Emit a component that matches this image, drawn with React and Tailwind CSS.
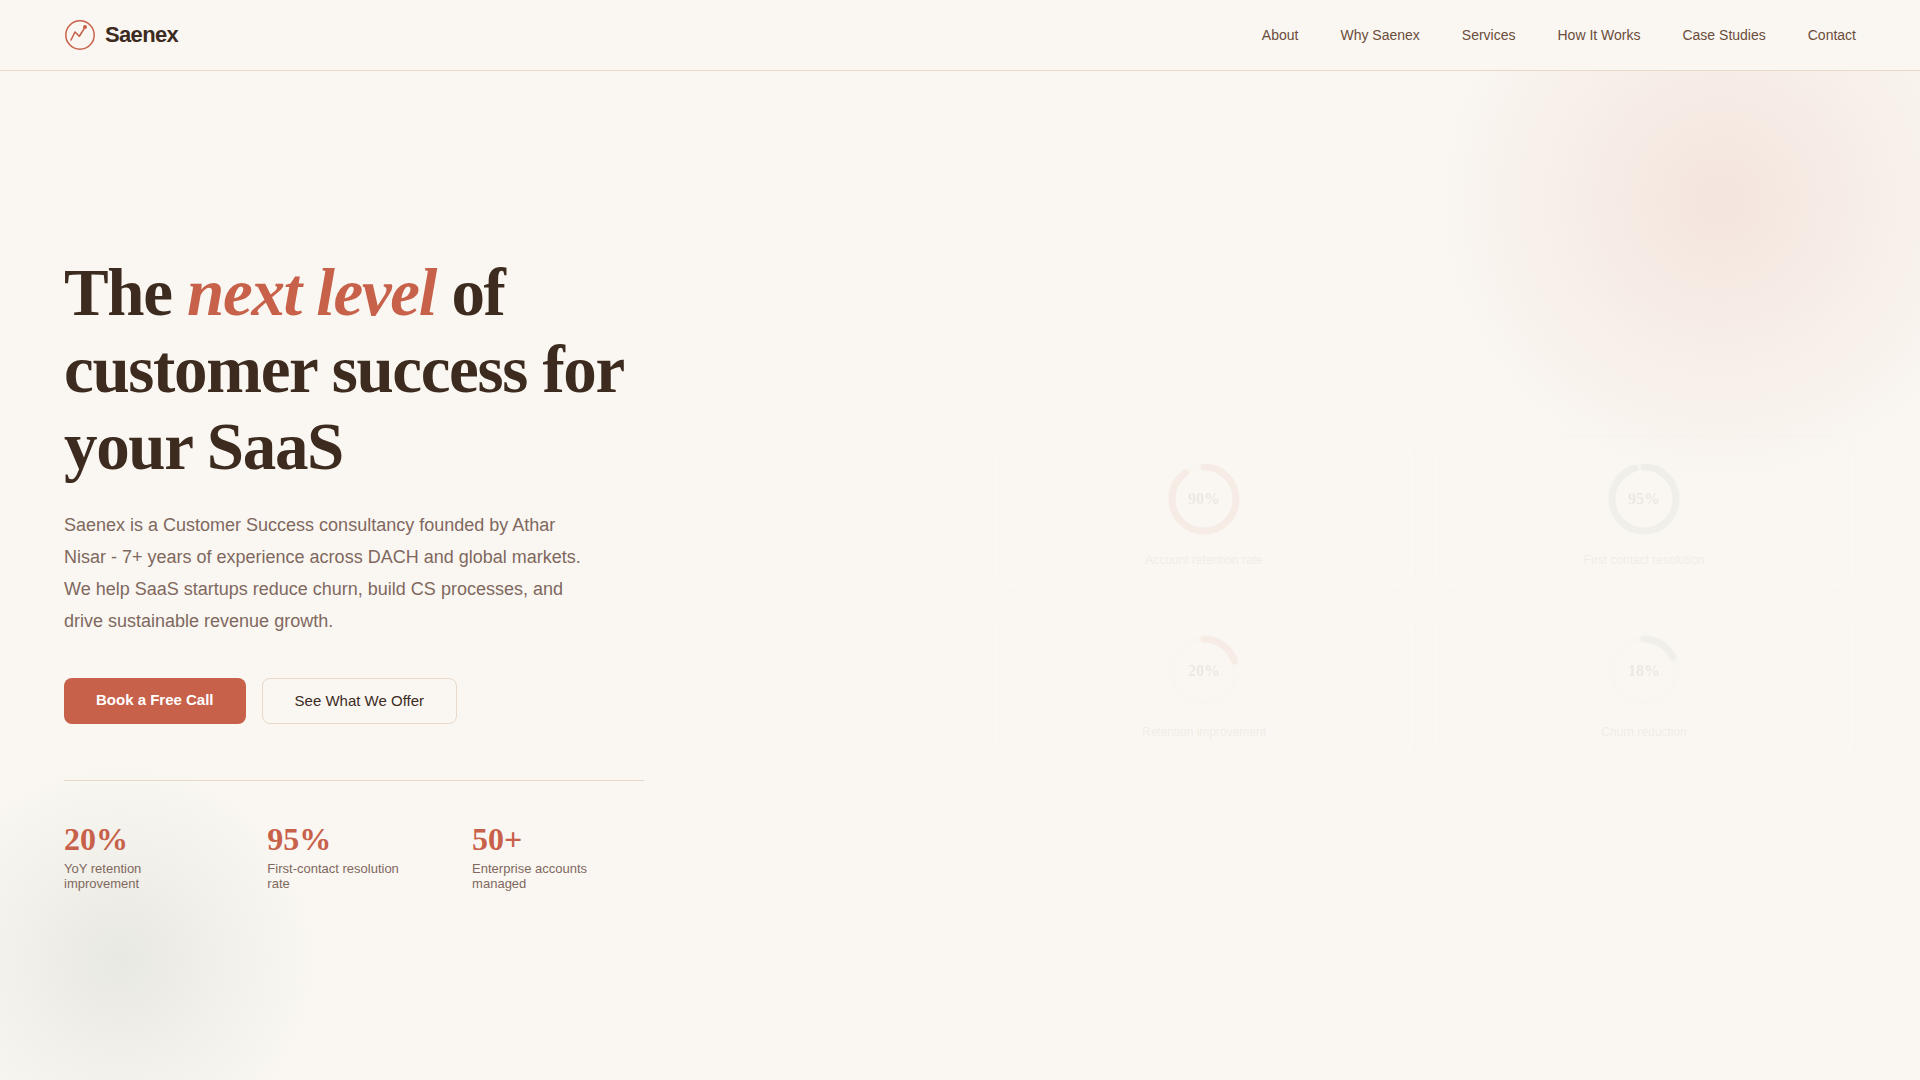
import React from "react";

const navLinks = [
  { label: "About", href: "#about" },
  { label: "Why Saenex", href: "#why" },
  { label: "Services", href: "#services" },
  { label: "How It Works", href: "#process" },
  { label: "Case Studies", href: "#cases" },
  { label: "Contact", href: "#contact" },
];

const stats = [
  { value: "20%", label: "YoY retention improvement" },
  { value: "95%", label: "First-contact resolution rate" },
  { value: "50+", label: "Enterprise accounts managed" },
];

const metrics = [
  { value: 90, label: "Account retention rate", color: "#c8614a" },
  { value: 95, label: "First contact resolution", color: "#7a9478" },
  { value: 20, label: "Retention improvement", color: "#c8614a" },
  { value: 18, label: "Churn reduction", color: "#7a9478" },
];

const Logo = () => (
  <a href="#home" className="flex items-center gap-[9px]">
    <svg className="h-8 w-8" viewBox="0 0 32 32" fill="none" stroke="#c8614a" strokeLinecap="round" strokeLinejoin="round">
      <circle cx="16" cy="16" r="14.2" strokeWidth="1.5" />
      <path d="M7 21L11 13L15.3 17.3L21 8.4" strokeWidth="1.6" />
      <circle cx="21" cy="8" r="2" fill="#c8614a" stroke="none" />
    </svg>
    <span className="text-[22px] font-bold leading-8 tracking-[-0.03em]">Saenex</span>
  </a>
);

const MetricCard = ({ metric }) => {
  const circumference = 2 * Math.PI * 32;

  return (
    <div className="flex flex-col items-center gap-4 rounded-[20px] border border-[#e8d9c9] bg-[#fdfaf6] p-6">
      <div className="grid h-[76px] w-[76px] place-items-center">
        <svg className="col-start-1 row-start-1 h-full w-full -rotate-90" viewBox="0 0 76 76" fill="none" strokeWidth="7">
          <circle cx="38" cy="38" r="32" stroke="#f5efe0" />
          <circle
            cx="38"
            cy="38"
            r="32"
            stroke={metric.color}
            strokeLinecap="round"
            strokeDasharray={`${(circumference * metric.value) / 100} ${circumference}`}
          />
        </svg>
        <span className="col-start-1 row-start-1 font-['Liberation_Serif',serif] text-base font-bold">{metric.value}%</span>
      </div>
      <p className="text-xs leading-[14px] text-[#7a6055]">{metric.label}</p>
    </div>
  );
};

export default function App() {
  return (
    <div className="flex min-h-screen flex-col bg-[#faf7f2] font-['Liberation_Sans',Arial,sans-serif] text-[#3d2b1f]">
      {/* Header */}
      <header className="relative z-10 flex items-center justify-between border-b border-[#e8d9c9] bg-[#faf7f2] px-16 py-[19px]">
        <Logo />
        <nav className="flex gap-[42px]">
          {navLinks.map((link) => (
            <a key={link.label} href={link.href} className="text-sm text-[#6b4c3b] hover:text-[#c8614a]">
              {link.label}
            </a>
          ))}
        </nav>
      </header>

      {/* Hero */}
      <section className="relative grid flex-1 grid-cols-2 items-center gap-16 overflow-hidden px-16 py-12">
        {/* Background glows */}
        <div className="pointer-events-none absolute -top-[171px] -right-[100px] h-[600px] w-[600px] rounded-full bg-[radial-gradient(circle,rgba(200,97,74,0.12)_0%,transparent_70%)]" />
        <div className="pointer-events-none absolute -bottom-[80px] -left-[80px] h-[400px] w-[400px] rounded-full bg-[radial-gradient(circle,rgba(122,148,125,0.14)_0%,transparent_70%)]" />

        <div className="relative max-w-[580px]">
          <h1 className="font-['Liberation_Serif',serif] text-[67px] font-bold leading-[77px] tracking-[-0.02em]">
            The <em className="text-[#c8614a]">next level</em> of customer success for your SaaS
          </h1>
          <p className="mt-6 max-w-[520px] text-lg leading-8 text-[#80685e]">
            Saenex is a Customer Success consultancy founded by Athar Nisar - 7+ years of experience across DACH and
            global markets. We help SaaS startups reduce churn, build CS processes, and drive sustainable revenue growth.
          </p>

          <div className="mt-[41px] flex gap-4">
            <a href="#contact" className="rounded-lg bg-[#c8614a] px-8 py-[14px] text-[15px] font-bold leading-4 text-white">
              Book a Free Call
            </a>
            <a href="#services" className="rounded-lg border border-[#e8d9c9] px-8 py-[14px] text-[15px] leading-4">
              See What We Offer
            </a>
          </div>

          <div className="mt-14 flex gap-12 border-t border-[#e8d9c9] pt-10 pb-1.5">
            {stats.map((stat) => (
              <div key={stat.value}>
                <div className="font-['Liberation_Serif',serif] text-[32px] font-bold leading-9 text-[#c8614a]">
                  {stat.value}
                </div>
                <div className="mt-1 text-[13px] leading-[15px] text-[#80685e]">{stat.label}</div>
              </div>
            ))}
          </div>
        </div>

        <div className="relative grid translate-y-6 grid-cols-2 gap-4 opacity-[0.07]">
          {metrics.map((metric) => (
            <MetricCard key={metric.label} metric={metric} />
          ))}
        </div>
      </section>
    </div>
  );
}
